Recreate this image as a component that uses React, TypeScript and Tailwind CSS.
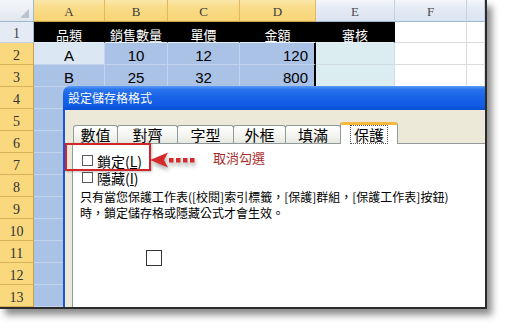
import React from "react";

const CJK = { fontFamily: '"Noto Sans CJK TC", "Noto Sans", sans-serif' };

function HeadCell({ label, sel }: { label: string; sel?: boolean }) {
  return (
    <div
      className={
        "flex items-end justify-center pb-[1px] border-r border-b text-[13px] leading-none " +
        (sel
          ? "bg-[linear-gradient(to_bottom,#fbe7ab_0%,#f9dc8a_35%,#f8d576_100%)] border-r-[#e2b85a] border-b-[#c9a04a] text-[#3b3b3b]"
          : "bg-[linear-gradient(to_bottom,#f4f7fb_0%,#e4ebf5_40%,#dbe4f1_100%)] border-r-[#c5d1e0] border-b-[#9eb6ce] text-[#4a4a4a]")
      }
      style={{ fontFamily: '"Liberation Serif", serif' }}
    >
      <span className="pb-[2px]">{label}</span>
    </div>
  );
}

function RowHead({ n, sel }: { n: number; sel?: boolean }) {
  return (
    <div
      className={
        "flex items-end justify-center border-r border-b text-[14px] leading-none " +
        (sel
          ? "bg-[#f9d87e] border-r-[#c9a04a] border-b-[#d6b15c] text-[#333]"
          : "bg-[#e4ebf5] border-r-[#9eb6ce] border-b-[#c5d1e0] text-[#444]")
      }
      style={{ fontFamily: '"Liberation Serif", serif' }}
    >
      <span className="pb-[1px]">{n}</span>
    </div>
  );
}

function Cell({
  kind,
  children,
  align = "center",
  edge,
}: {
  kind: "blue" | "active" | "cyan" | "white" | "black";
  children?: React.ReactNode;
  align?: "center" | "right";
  edge?: boolean;
}) {
  const bg = {
    blue: "bg-[#a9c2e6] border-r-[#c3d4ee] border-b-[#c3d4ee]",
    active: "bg-[#dbe8f3] border-r-[#c3d4ee] border-b-[#c3d4ee]",
    cyan: "bg-[#dbedf1] border-r-[#d2dde2] border-b-[#d2dde2]",
    white: "bg-white border-r-[#dadcdd] border-b-[#dadcdd]",
    black: "bg-black border-r-black border-b-[#e8eef7] text-white",
  }[kind];
  return (
    <div
      className={
        "flex items-end border-r border-b leading-none " +
        bg +
        (align === "right" ? " justify-end pr-[6px]" : " justify-center") +
        (edge ? " border-r-[2px] border-r-black" : "")
      }
    >
      {children}
    </div>
  );
}

function Num({ children }: { children: React.ReactNode }) {
  return (
    <span className="text-[15px] text-black pb-[1px]" style={{ fontFamily: '"Liberation Sans", Arial, sans-serif' }}>
      {children}
    </span>
  );
}

function Head({ children }: { children: React.ReactNode }) {
  return (
    <span className="text-[13px] pb-[1px]" style={CJK}>
      {children}
    </span>
  );
}

function Sheet() {
  const rows = [4, 5, 6, 7, 8, 9, 10, 11, 12, 13];
  return (
    <div className="grid grid-cols-[34px_71px_63px_72px_76px_79px_72px_18px] grid-rows-[22px_21px_22px_22px_22px_22px_22px_22px_22px_22px_22px_22px_22px_22px]">
      <div className="relative bg-[linear-gradient(to_bottom,#f4f6f9,#e2e7ee)] border-r border-b border-r-[#9eb6ce] border-b-[#9eb6ce]">
        <div className="absolute right-[4px] bottom-[3px] w-0 h-0 border-l-[9px] border-l-transparent border-b-[9px] border-b-[#b9c3cf]" />
      </div>
      <HeadCell label="A" sel />
      <HeadCell label="B" sel />
      <HeadCell label="C" sel />
      <HeadCell label="D" sel />
      <HeadCell label="E" />
      <HeadCell label="F" />
      <HeadCell label="" />

      <RowHead n={1} />
      <Cell kind="black"><Head>品類</Head></Cell>
      <Cell kind="black"><Head>銷售數量</Head></Cell>
      <Cell kind="black"><Head>單價</Head></Cell>
      <Cell kind="black"><Head>金額</Head></Cell>
      <Cell kind="black"><Head>審核</Head></Cell>
      <Cell kind="white" />
      <Cell kind="white" />

      <RowHead n={2} sel />
      <Cell kind="active"><Num>A</Num></Cell>
      <Cell kind="blue"><Num>10</Num></Cell>
      <Cell kind="blue"><Num>12</Num></Cell>
      <Cell kind="blue" align="right" edge><Num>120</Num></Cell>
      <Cell kind="cyan" />
      <Cell kind="white" />
      <Cell kind="white" />

      <RowHead n={3} sel />
      <Cell kind="blue"><Num>B</Num></Cell>
      <Cell kind="blue"><Num>25</Num></Cell>
      <Cell kind="blue"><Num>32</Num></Cell>
      <Cell kind="blue" align="right" edge><Num>800</Num></Cell>
      <Cell kind="cyan" />
      <Cell kind="white" />
      <Cell kind="white" />

      {rows.map((n) => (
        <React.Fragment key={n}>
          <RowHead n={n} sel />
          <Cell kind="blue" />
          <Cell kind="blue" />
          <Cell kind="blue" />
          <Cell kind="blue" edge />
          <Cell kind="cyan" />
          <Cell kind="white" />
          <Cell kind="white" />
        </React.Fragment>
      ))}
    </div>
  );
}

function Tab({ label, w, active }: { label: string; w: string; active?: boolean }) {
  if (active) {
    return (
      <div
        className={
          w +
          " h-[22px] -mb-[1px] relative z-10 flex items-center justify-center bg-white border-l border-r border-[#919b9c] border-t-[3px] border-t-[#f5b93f] rounded-t-[3px]"
        }
      >
        <span className="text-[15px] leading-none text-black border border-dotted border-[#555] px-[3px] py-[1px]" style={CJK}>
          {label}
        </span>
      </div>
    );
  }
  return (
    <div
      className={
        w +
        " h-[18px] flex items-center justify-center bg-[linear-gradient(to_bottom,#ffffff,#f3f3ef_60%,#e8e8e2)] border-l border-r border-t border-[#919b9c] rounded-t-[3px] -mr-[1px]"
      }
    >
      <span className="text-[15px] leading-none text-black" style={CJK}>
        {label}
      </span>
    </div>
  );
}

function Check({ label, u }: { label: string; u: string }) {
  return (
    <div className="h-[17px] flex items-center ml-[2px] gap-[4px]">
      <div className="w-[11px] h-[11px] border border-[#5a5a5a] bg-white" />
      <span className="text-[14px] leading-[14px] text-black" style={CJK}>
        {label}(<span className="underline underline-offset-[1px]">{u}</span>)
      </span>
    </div>
  );
}

function Dialog() {
  return (
    <div className="absolute left-[63px] top-[86px] w-[440px] h-[240px] flex flex-col">
      <div className="h-[24px] rounded-tl-[7px] bg-[linear-gradient(to_bottom,#5b9cf6_0%,#2a74ee_14%,#1863e6_45%,#115de6_80%,#0a4fd0_100%)] flex items-center pl-[5px]">
        <span className="text-white text-[12px] leading-none" style={CJK}>
          設定儲存格格式
        </span>
      </div>
      <div className="flex-1 flex flex-col bg-[#ece9d8] border-l-[2px] border-[#1d52dc] pl-[7px] pt-[12px]">
        <div className="flex items-end h-[21px] pl-[1px]">
          <Tab label="數值" w="w-[45px]" />
          <Tab label="對齊" w="w-[61px]" />
          <Tab label="字型" w="w-[57px]" />
          <Tab label="外框" w="w-[53px]" />
          <Tab label="填滿" w="w-[56px]" />
          <Tab label="保護" w="w-[58px]" active />
        </div>
        <div className="flex-1 bg-white border border-[#919b9c] pl-[7px] pt-[8px]">
          <Check label="鎖定" u="L" />
          <Check label="隱藏" u="I" />
          <div className="mt-[3px] text-[12px] leading-[16px] text-black" style={CJK}>
            <div>只有當您保護工作表([校閱]索引標籤，[保護]群組，[保護工作表]按鈕)</div>
            <div>時，鎖定儲存格或隱藏公式才會生效。</div>
          </div>
          <div className="mt-[29px] ml-[66px] w-[16px] h-[16px] border border-[#333]" />
        </div>
      </div>
    </div>
  );
}

function Annotations() {
  return (
    <>
      <div className="absolute left-[65px] top-[143px] w-[86px] h-[28px] border-[2px] border-[#d0262a] shadow-[1px_1px_2px_rgba(0,0,0,0.25)]" />
      <svg
        className="absolute left-[148px] top-[150px] drop-shadow-[1px_3px_2px_rgba(0,0,0,0.35)]"
        width="52"
        height="22"
        viewBox="0 0 52 22"
      >
        <path d="M2 10 L20 2.5 L16 10 L20 17.5 Z" fill="#d42a2a" />
        <rect x="21" y="8" width="4.5" height="4.5" fill="#d42a2a" />
        <rect x="28" y="8" width="4.5" height="4.5" fill="#d42a2a" />
        <rect x="35" y="8" width="4.5" height="4.5" fill="#d42a2a" />
        <rect x="42" y="8" width="4.5" height="4.5" fill="#d42a2a" />
      </svg>
      <div className="absolute left-[213px] top-[151px] text-[13px] leading-none text-[#a82c2c]" style={CJK}>
        取消勾選
      </div>
    </>
  );
}

export default function App() {
  return (
    <div className="w-[508px] h-[329px] bg-white overflow-hidden">
      <div className="relative w-[487px] h-[309px] overflow-hidden border-r-[2px] border-b-[2px] border-[#2b2b2b] shadow-[5px_6px_7px_rgba(0,0,0,0.45)]">
        <Sheet />
        <Dialog />
        <Annotations />
      </div>
    </div>
  );
}
